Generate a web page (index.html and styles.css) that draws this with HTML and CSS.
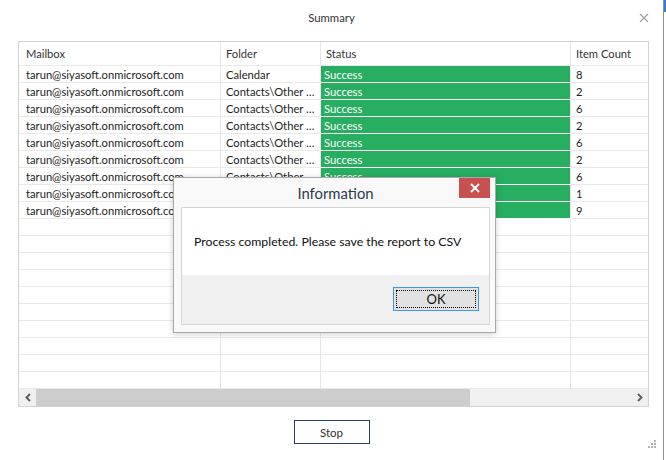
FILE: index.html
```html
<!DOCTYPE html>
<html lang="en">
<head>
<meta charset="UTF-8">
<meta name="viewport" content="width=device-width, initial-scale=1.0">
<title>Summary</title>
<link rel="stylesheet" href="styles.css">
</head>
<body>

<div class="window">
    <div class="titlebar">
        <span class="title">Summary</span>
        <svg class="close" width="10" height="10" viewBox="0 0 10 10"><path d="M1 1L9 9M9 1L1 9" stroke="#a0a0a0" stroke-width="1.2"/></svg>
    </div>

    <div class="grid">
        <div class="grid-body">
            <div class="row head">
                <div class="cell first">Mailbox</div>
                <div class="cell">Folder</div>
                <div class="cell status-h">Status</div>
                <div class="cell">Item Count</div>
            </div>
            <div class="row"><div class="cell first">tarun@siyasoft.onmicrosoft.com</div><div class="cell">Calendar</div><div class="cell ok">Success</div><div class="cell">8</div></div>
            <div class="row"><div class="cell first">tarun@siyasoft.onmicrosoft.com</div><div class="cell">Contacts\Other Contacts</div><div class="cell ok">Success</div><div class="cell">2</div></div>
            <div class="row"><div class="cell first">tarun@siyasoft.onmicrosoft.com</div><div class="cell">Contacts\Other Contacts</div><div class="cell ok">Success</div><div class="cell">6</div></div>
            <div class="row"><div class="cell first">tarun@siyasoft.onmicrosoft.com</div><div class="cell">Contacts\Other Contacts</div><div class="cell ok">Success</div><div class="cell">2</div></div>
            <div class="row"><div class="cell first">tarun@siyasoft.onmicrosoft.com</div><div class="cell">Contacts\Other Contacts</div><div class="cell ok">Success</div><div class="cell">6</div></div>
            <div class="row"><div class="cell first">tarun@siyasoft.onmicrosoft.com</div><div class="cell">Contacts\Other Contacts</div><div class="cell ok">Success</div><div class="cell">2</div></div>
            <div class="row"><div class="cell first">tarun@siyasoft.onmicrosoft.com</div><div class="cell">Contacts\Other Contacts</div><div class="cell ok">Success</div><div class="cell">6</div></div>
            <div class="row"><div class="cell first">tarun@siyasoft.onmicrosoft.com</div><div class="cell">Contacts\Other Contacts</div><div class="cell ok">Success</div><div class="cell">1</div></div>
            <div class="row"><div class="cell first">tarun@siyasoft.onmicrosoft.com</div><div class="cell">Contacts\Other Contacts</div><div class="cell ok">Success</div><div class="cell">9</div></div>
            <div class="row"><div class="cell first"></div><div class="cell"></div><div class="cell"></div><div class="cell"></div></div>
            <div class="row"><div class="cell first"></div><div class="cell"></div><div class="cell"></div><div class="cell"></div></div>
            <div class="row"><div class="cell first"></div><div class="cell"></div><div class="cell"></div><div class="cell"></div></div>
            <div class="row"><div class="cell first"></div><div class="cell"></div><div class="cell"></div><div class="cell"></div></div>
            <div class="row"><div class="cell first"></div><div class="cell"></div><div class="cell"></div><div class="cell"></div></div>
            <div class="row"><div class="cell first"></div><div class="cell"></div><div class="cell"></div><div class="cell"></div></div>
            <div class="row"><div class="cell first"></div><div class="cell"></div><div class="cell"></div><div class="cell"></div></div>
            <div class="row"><div class="cell first"></div><div class="cell"></div><div class="cell"></div><div class="cell"></div></div>
            <div class="row"><div class="cell first"></div><div class="cell"></div><div class="cell"></div><div class="cell"></div></div>
            <div class="row"><div class="cell first"></div><div class="cell"></div><div class="cell"></div><div class="cell"></div></div>
        </div>
        <div class="hscroll">
            <div class="arrow"><svg width="8" height="9" viewBox="0 0 8 9"><path d="M6 1L2.5 4.5L6 8" fill="none" stroke="#606060" stroke-width="2"/></svg></div>
            <div class="track"><div class="thumb"></div></div>
            <div class="arrow"><svg width="8" height="9" viewBox="0 0 8 9"><path d="M2 1L5.5 4.5L2 8" fill="none" stroke="#606060" stroke-width="2"/></svg></div>
        </div>
    </div>

    <div class="actions">
        <button class="btn-stop">Stop</button>
    </div>

    <svg class="grip" width="8" height="8" viewBox="0 0 8 8" fill="#b4b4b4">
        <rect x="6" y="0" width="2" height="2"/>
        <rect x="3" y="3" width="2" height="2"/><rect x="6" y="3" width="2" height="2"/>
        <rect x="0" y="6" width="2" height="2"/><rect x="3" y="6" width="2" height="2"/><rect x="6" y="6" width="2" height="2"/>
    </svg>

    <div class="dialog">
        <div class="dialog-title">
            <span>Information</span>
            <div class="dialog-close"><svg width="10" height="10" viewBox="0 0 10 10"><path d="M1 1L9 9M9 1L1 9" stroke="#fff" stroke-width="1.8"/></svg></div>
        </div>
        <div class="dialog-panel">
            <div class="dialog-msg">Process completed. Please save the report to CSV</div>
            <div class="dialog-btns">
                <button class="btn-ok"><span>OK</span></button>
            </div>
        </div>
    </div>
</div>
<div class="edge"></div>

</body>
</html>
```

FILE: styles.css
```css
body {
    margin: 0;
    width: 666px;
    height: 460px;
    display: flex;
    background: #fff;
    font-family: Lato, "Noto Sans", sans-serif;
    font-size: 11.2px;
    color: #1e1e1e;
    overflow: hidden;
}
.window {
    position: relative;
    width: 663px;
    height: 460px;
    border-right: 1px solid #8f8f8f;
}
.edge {
    width: 2px;
    background: linear-gradient(#2f7fd6 0 12px, #fff 12px);
}
.titlebar {
    height: 34px;
    display: flex;
    align-items: center;
    justify-content: center;
    position: relative;
}
.title {
    color: #333;
    font-size: 11.3px;
}
.close {
    position: absolute;
    right: 14px;
    top: 13px;
}
.grid {
    margin: 7px 0 0 18px;
    width: 631px;
    height: 366px;
    box-sizing: border-box;
    border: 1px solid #d3d3d3;
    display: flex;
    flex-direction: column;
}
.grid-body {
    height: 347px;
    overflow: hidden;
}
.row {
    display: grid;
    grid-template-columns: 202px 100px 250px 100px;
    height: 17px;
}
.row.head {
    height: 24px;
    color: #333;
}
.cell {
    box-sizing: border-box;
    border-right: 1px solid #e6e6e6;
    border-bottom: 1px solid #e9e9e9;
    padding: 1px 5px 0;
    line-height: 15px;
    white-space: nowrap;
    overflow: hidden;
    text-overflow: ellipsis;
}
.cell.first {
    padding-left: 7px;
}
.head .cell {
    padding-top: 0;
    line-height: 23px;
}
.cell.ok {
    background: #27ae60;
    color: #fff;
    border-bottom-color: #fff;
    padding-left: 3px;
}
.hscroll {
    height: 17px;
    display: flex;
    background: #f0f0f0;
}
.arrow {
    width: 17px;
    display: flex;
    align-items: center;
    justify-content: center;
}
.track {
    flex: 1;
}
.thumb {
    width: 434px;
    height: 100%;
    background: #cdcdcd;
}
.actions {
    display: flex;
    justify-content: center;
    margin-top: 13px;
}
.btn-stop {
    width: 76px;
    height: 24px;
    background: #fff;
    border: 1px solid #263f6c;
    font-family: inherit;
    font-size: 11.5px;
    color: #333;
    padding: 0;
}
.grip {
    position: absolute;
    right: 7px;
    bottom: 12px;
}
.dialog {
    position: absolute;
    left: 173px;
    top: 177px;
    width: 323px;
    height: 156px;
    box-sizing: border-box;
    background: #f9f9f9;
    border: 1px solid #a9a9a9;
    box-shadow: 0 1px 6px rgba(0, 0, 0, 0.2);
    padding: 0 5px 7px 7px;
    display: flex;
    flex-direction: column;
}
.dialog-title {
    height: 29px;
    display: flex;
    align-items: center;
    justify-content: center;
    position: relative;
    font-size: 14.8px;
    color: #2b3a4d;
}
.dialog-close {
    position: absolute;
    right: 0;
    top: 0;
    width: 31px;
    height: 20px;
    background: #c75050;
    display: flex;
    align-items: center;
    justify-content: center;
}
.dialog-panel {
    flex: 1;
    border: 1px solid #d6d6d6;
    display: flex;
    flex-direction: column;
}
.dialog-msg {
    height: 67px;
    background: #fff;
    display: flex;
    align-items: center;
    padding-left: 12px;
    font-size: 12.3px;
    color: #101010;
}
.dialog-btns {
    flex: 1;
    background: #f0f0f0;
    display: flex;
    justify-content: flex-end;
    align-items: flex-start;
    padding: 12px 10px 0 0;
}
.btn-ok {
    width: 86px;
    height: 24px;
    padding: 2px;
    background: #e1e1e1;
    border: 1px solid #3b99e8;
    font-family: inherit;
    font-size: 13px;
    color: #111;
    display: flex;
}
.btn-ok span {
    flex: 1;
    border: 1px dotted #000;
    display: flex;
    align-items: center;
    justify-content: center;
}
```
